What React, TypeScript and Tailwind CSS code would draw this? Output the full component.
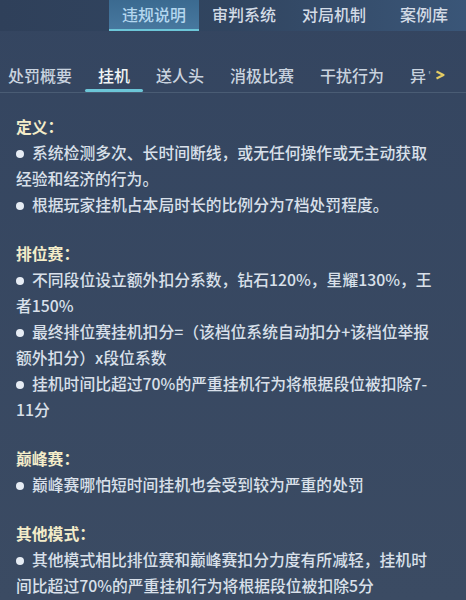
import type { ReactNode } from 'react';

const topTabs = ['违规说明', '审判系统', '对局机制', '案例库'];
const subTabs = ['处罚概要', '挂机', '送人头', '消极比赛', '干扰行为'];

const sections: { title: string; items: string[] }[] = [
  {
    title: '定义：',
    items: ['系统检测多次、长时间断线，或无任何操作或无主动获取经验和经济的行为。', '根据玩家挂机占本局时长的比例分为7档处罚程度。'],
  },
  {
    title: '排位赛：',
    items: [
      '不同段位设立额外扣分系数，钻石120%，星耀130%，王者150%',
      '最终排位赛挂机扣分=（该档位系统自动扣分+该档位举报额外扣分）x段位系数',
      '挂机时间比超过70%的严重挂机行为将根据段位被扣除7-11分',
    ],
  },
  {
    title: '巅峰赛：',
    items: ['巅峰赛哪怕短时间挂机也会受到较为严重的处罚'],
  },
  {
    title: '其他模式：',
    items: ['其他模式相比排位赛和巅峰赛扣分力度有所减轻，挂机时间比超过70%的严重挂机行为将根据段位被扣除5分'],
  },
];

export default function App() {
  return (
    <div
      className="h-[600px] w-[466px] overflow-hidden bg-gradient-to-b from-[#344560] to-[#3b4b63] text-[#d9e0ea]"
      style={{ fontFamily: '"Noto Sans CJK SC", "Noto Sans", sans-serif' }}
    >
      <TopBar />
      <SubTabs />
      <div className="pl-4 pr-[32px] pt-[21px]">
        {sections.map((s, i) => (
          <Section key={s.title} title={s.title} first={i === 0}>
            {s.items.map((t) => (
              <Bullet key={t}>{t}</Bullet>
            ))}
          </Section>
        ))}
      </div>
    </div>
  );
}

function TopBar() {
  return (
    <div className="flex h-[31px] overflow-hidden bg-gradient-to-r from-[#2f405a] via-[#314560] to-[#3a5678] pl-[109px]">
      {topTabs.map((t, i) => (
        <div
          key={t}
          className={
            i === 0
              ? 'flex w-[90px] shrink-0 flex-col bg-gradient-to-b from-[#3b6a90] to-[#4879a0]'
              : 'flex w-[90px] shrink-0 flex-col'
          }
        >
          <span
            className={
              i === 0
                ? 'flex-1 text-center text-[16px] font-medium leading-[29px] text-[#b4d7ef]'
                : 'flex-1 text-center text-[16px] font-medium leading-[29px] text-[#d3dbe6]'
            }
          >
            {t}
          </span>
          <span className={i === 0 ? 'h-[3px] bg-[#6cc6d8]' : 'h-[3px]'} />
        </div>
      ))}
    </div>
  );
}

function SubTabs() {
  return (
    <div className="mt-[32px] flex items-end border-b border-[#4a5c74]">
      <div className="-ml-[5px] flex">
        {subTabs.map((t, i) => (
          <div key={t} className="flex flex-col px-[13px]">
            <span className={i === 1 ? 'text-[16px] font-medium leading-6 text-[#f0f4f4]' : 'text-[16px] font-medium leading-6 text-[#c9d3df]'}>{t}</span>
            <span className={i === 1 ? 'mx-[-13px] mt-[2px] h-[3px] rounded-full bg-[#6cc6d8]' : 'mt-[2px] h-[3px]'} />
          </div>
        ))}
        <div className="flex flex-col pl-[13px]">
          <span className="flex items-center text-[16px] font-medium leading-6 text-[#c9d3df]">
            异<span className="ml-[2px] text-[10px] text-[#8c9aab]">'</span>
            <svg className="ml-[4px]" width="11" height="10" viewBox="0 0 11 10">
              <path d="M1.5 1.5 L8.5 5 L1.5 8.5" fill="none" stroke="#e5cc63" strokeWidth="2.2" strokeLinejoin="round" />
            </svg>
          </span>
          <span className="mt-[2px] h-[3px]" />
        </div>
      </div>
    </div>
  );
}

function Section({ title, first, children }: { title: string; first: boolean; children: ReactNode }) {
  return (
    <div className={first ? '' : 'mt-[23px]'}>
      <h2 className="text-[15.8px] font-bold leading-[26px] text-[#f3ecc9]">{title}</h2>
      {children}
    </div>
  );
}

function Bullet({ children }: { children: ReactNode }) {
  return (
    <p className="text-[15.8px] font-medium leading-[26px]">
      <span className="mr-2 inline-block h-2 w-2 rounded-full bg-[#e6ecf4] align-[1px]" />
      {children}
    </p>
  );
}
